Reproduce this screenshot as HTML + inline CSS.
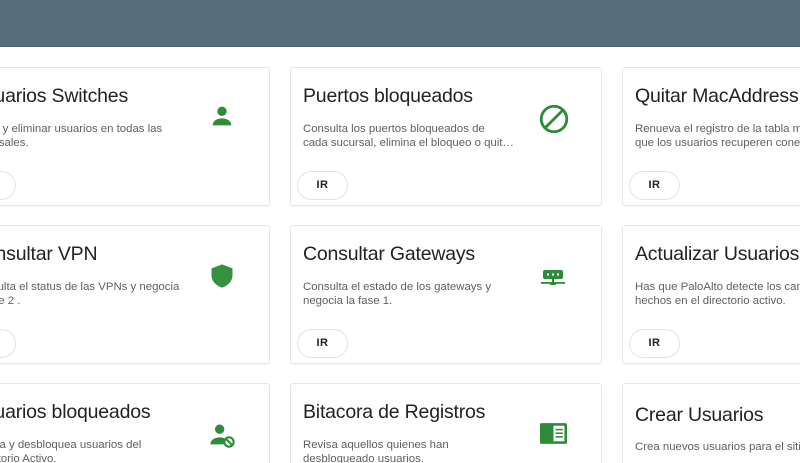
<!DOCTYPE html>
<html><head><style>
*{margin:0;padding:0;box-sizing:border-box}
html,body{width:800px;height:463px;overflow:hidden}
body{background:#fff;font-family:"Liberation Sans",sans-serif;position:relative}
.hdr{position:absolute;left:0;top:0;width:800px;height:47px;background:#566e79;border-bottom:1px solid #4c6470}
.card{position:absolute;width:312px;height:139px;border:1px solid #e6e6e6;border-radius:3px;background:#fff;box-shadow:0 1px 1px rgba(0,0,0,.04)}
.t{position:absolute;left:12px;top:17px;font-size:19.5px;color:#222;white-space:nowrap;letter-spacing:-0.2px}
.d{position:absolute;left:12px;top:55px;font-size:11.4px;line-height:13.5px;color:#606060;white-space:nowrap}
.b{position:absolute;left:6px;top:103px;width:51px;height:29px;border:1px solid #e3e3e3;border-radius:15px;font-size:11px;font-weight:bold;color:#222;text-align:center;line-height:27px;letter-spacing:.5px}
.i{position:absolute}
</style></head><body>
<div class="hdr"></div>

<div class="card" style="left:-42px;top:67px"><div class="t">Usuarios Switches</div><div class="d">Crear y eliminar usuarios en todas las<br>sucursales.</div><div class="b">IR</div>
<svg class="i" viewBox="0 0 24 24" style="left:249px;top:34px;width:28px;height:28px"><circle cx="12" cy="8" r="4" fill="#2e8b3a"/><path d="M4 20c0-4 4-6 8-6s8 2 8 6z" fill="#2e8b3a"/></svg></div>

<div class="card" style="left:290px;top:67px"><div class="t">Puertos bloqueados</div><div class="d">Consulta los puertos bloqueados de<br>cada sucursal, elimina el bloqueo o quit…</div><div class="b">IR</div>
<svg class="i" viewBox="0 0 24 24" style="left:246px;top:34px;width:34px;height:34px"><circle cx="12" cy="12" r="9" fill="none" stroke="#2e8b3a" stroke-width="2"/><path d="M6 18L18 6" stroke="#2e8b3a" stroke-width="2"/></svg></div>

<div class="card" style="left:622px;top:67px"><div class="t">Quitar MacAddress</div><div class="d">Renueva el registro de la tabla mac<br>que los usuarios recuperen conexión</div><div class="b">IR</div></div>

<div class="card" style="left:-42px;top:225px"><div class="t">Consultar VPN</div><div class="d">Consulta el status de las VPNs y negocia<br>la fase 2 .</div><div class="b">IR</div>
<svg class="i" viewBox="0 0 24 24" style="left:249px;top:35px;width:28px;height:30px"><path d="M12 2L3 5.5v6c0 5 4 9 9 10.5 5-1.5 9-5.5 9-10.5v-6z" fill="#35913f"/></svg></div>

<div class="card" style="left:290px;top:225px"><div class="t">Consultar Gateways</div><div class="d">Consulta el estado de los gateways y<br>negocia la fase 1.</div><div class="b">IR</div>
<svg class="i" viewBox="0 0 26 18" style="left:250px;top:44px;width:26px;height:18px"><rect x="2" y="0" width="20" height="9" rx="2" fill="#2e8b3a"/><rect x="6" y="3.5" width="2" height="2" fill="#fff"/><rect x="11" y="3.5" width="2" height="2" fill="#fff"/><rect x="16" y="3.5" width="2" height="2" fill="#fff"/><rect x="11" y="9" width="2" height="4" fill="#2e8b3a"/><rect x="0" y="12" width="24" height="1.8" fill="#2e8b3a"/><rect x="9" y="12" width="6" height="3" rx="1" fill="#2e8b3a"/></svg></div>

<div class="card" style="left:622px;top:225px"><div class="t">Actualizar Usuarios</div><div class="d">Has que PaloAlto detecte los cambios<br>hechos en el directorio activo.</div><div class="b">IR</div></div>

<div class="card" style="left:-42px;top:383px"><div class="t">Usuarios bloqueados</div><div class="d">Revisa y desbloquea usuarios del<br>Directorio Activo.</div>
<svg class="i" viewBox="0 0 24 24" style="left:249px;top:37px;width:28px;height:28px"><circle cx="10" cy="7" r="4" fill="#2e8b3a"/><path d="M2 20c0-4 4-6 8-6 2 0 3 .3 4 .8V20z" fill="#2e8b3a"/><circle cx="18" cy="18" r="4" fill="none" stroke="#2e8b3a" stroke-width="1.8"/><path d="M15.5 15.5l5 5" stroke="#2e8b3a" stroke-width="1.8"/></svg></div>

<div class="card" style="left:290px;top:383px"><div class="t">Bitacora de Registros</div><div class="d">Revisa aquellos quienes han<br>desbloqueado usuarios.</div>
<svg class="i" viewBox="0 0 26 20" style="left:249px;top:39px;width:27px;height:21px"><rect x="0" y="0" width="26" height="20" rx="1.5" fill="#2e8b3a"/><rect x="13" y="2.5" width="10.5" height="15" fill="#fff"/><rect x="15" y="5.5" width="7" height="1.5" fill="#2e8b3a"/><rect x="15" y="9" width="7" height="1.5" fill="#2e8b3a"/><rect x="15" y="12.5" width="7" height="1.5" fill="#2e8b3a"/></svg></div>

<div class="card" style="left:622px;top:383px"><div class="t" style="top:20px">Crear Usuarios</div><div class="d" style="top:57px">Crea nuevos usuarios para el sitio</div></div>
</body></html>
